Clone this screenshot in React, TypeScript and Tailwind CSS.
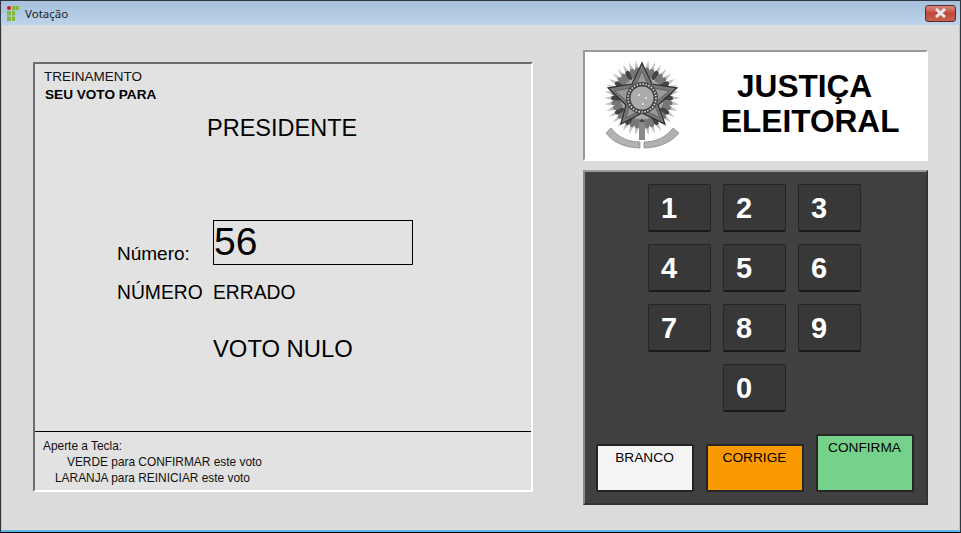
const linhas = [
  ["1", "2", "3"],
  ["4", "5", "6"],
  ["7", "8", "9"],
];

function Tecla({ n }: { n: string }) {
  return (
    <button className="w-[63px] h-[48px] rounded-[2px] bg-[#383838] border border-[#252525] border-b-2 border-b-[#1a1a1a] text-white text-[29px] font-bold text-left pl-[12px] pt-[1px] leading-none">
      {n}
    </button>
  );
}

function Brasao() {
  const raios = Array.from({ length: 36 }, (_, i) => i * 10);
  const star = "39,3 49,24 74,28 55,45 62,64 39,53 18,64 23,45 5,28 29,24";
  const inner = "39,11 46,27 66,31 51,44 57,58 39,49 23,58 27,44 12,31 32,27";
  return (
    <svg width="80" height="92" viewBox="0 0 80 92" className="shrink-0 blur-[0.4px]">
      <g transform="translate(39 38)">
        {raios.map((r) => (
          <polygon key={r} points="-3,-26 0,-38 3,-26" fill="#c2c2c2" transform={`rotate(${r})`} />
        ))}
        <circle r="29" fill="#a8a8a8" />
        {raios.map((r) => (
          <ellipse key={r} cx="0" cy="-26" rx="2.6" ry="5" fill={r % 30 === 0 ? "#444" : "#777"} transform={`rotate(${r})`} />
        ))}
      </g>
      <polygon points={star} fill="#777" stroke="#2c2c2c" strokeWidth="1.2" />
      <polygon points={inner} fill="#9a9a9a" stroke="#555" strokeWidth="0.8" />
      <circle cx="39" cy="38" r="16" fill="#444" />
      <circle cx="39" cy="38" r="14" fill="none" stroke="#dedede" strokeWidth="1.6" strokeDasharray="1.5 1.5" />
      <circle cx="39" cy="38" r="11.5" fill="#ababab" />
      <circle cx="36" cy="35" r="1" fill="#ececec" />
      <circle cx="43" cy="38" r="1" fill="#ececec" />
      <circle cx="40" cy="44" r="1" fill="#ececec" />
      <rect x="36" y="62" width="6" height="18" fill="#8a8a8a" />
      <path d="M8 68 C16 79 28 82 37 82 L37 88 C24 88 10 83 3 73 Z" fill="#b2b2b2" stroke="#808080" strokeWidth="0.7" />
      <path d="M70 68 C62 79 50 82 41 82 L41 88 C54 88 68 83 76 73 Z" fill="#b2b2b2" stroke="#808080" strokeWidth="0.7" />
    </svg>
  );
}

export default function App() {
  return (
    <div className="w-[961px] h-[533px] flex flex-col overflow-hidden bg-[#dcdcdc] border border-[#2e3840] border-b-black font-['Liberation_Sans',Arial,sans-serif] text-[#111]">
      <div className="h-[24px] shrink-0 flex items-center pl-[6px] pr-[4px] bg-gradient-to-b from-[#a6c1dc] to-[#bdd3ea]">
        <svg width="12" height="15" viewBox="0 0 12 15" className="shrink-0">
          <circle cx="2" cy="2" r="2" fill="#e8101c" />
          <rect x="5" y="0" width="3" height="4" fill="#7fb83c" />
          <rect x="8.5" y="0" width="3.5" height="4" fill="#7fb83c" />
          <rect x="0" y="5" width="4" height="4.5" fill="#7fb83c" />
          <rect x="5" y="5" width="3" height="4.5" fill="#7fb83c" />
          <rect x="0" y="10.5" width="4" height="4.5" fill="#7fb83c" />
          <rect x="5" y="10.5" width="3" height="4.5" fill="#7fb83c" />
        </svg>
        <span className="ml-[6px] mt-[1px] text-[11.5px] font-['Noto_Sans',sans-serif] text-[#222]">Votação</span>
        <div className="ml-auto w-[31px] h-[17px] rounded-[3px] border border-[#5a2a30] bg-gradient-to-b from-[#d98a80] via-[#c0483a] to-[#c8604c] flex items-center justify-center">
          <svg width="15" height="10" viewBox="0 0 15 10">
            <path d="M3 1 L12 9 M12 1 L3 9" stroke="#e8e8e8" strokeWidth="3" />
          </svg>
        </div>
      </div>

      <div className="flex-1 flex border-x border-b-2 border-x-[#a9c6de] border-b-[#5fb8e8] pl-[31px]">
        <div className="w-[500px] h-[430px] mt-[37px] bg-[#e2e2e2] border-2 border-t-[#6e6e6e] border-l-[#6e6e6e] border-r-white border-b-white flex flex-col">
          <div className="flex-1 flex flex-col pl-[9px]">
            <p className="text-[13.5px] leading-[16px] mt-[5px] text-[#111]">TREINAMENTO</p>
            <p className="text-[13.6px] leading-[14px] mt-[3px] ml-[1px] font-bold text-black">SEU VOTO PARA</p>
            <p className="text-[23.5px] leading-[28px] mt-[12px] ml-[163px] text-black">PRESIDENTE</p>
            <div className="flex items-end mt-[78px] ml-[73px]">
              <span className="w-[96px] text-[19px] leading-[21px] mb-[1px] text-black">Número:</span>
              <div className="w-[200px] h-[45px] border border-black text-[39px] leading-[41px] text-black">56</div>
            </div>
            <div className="flex mt-[17px] ml-[73px] text-[19.3px] leading-[21px] text-black">
              <span className="w-[96px]">NÚMERO</span>
              <span>ERRADO</span>
            </div>
            <p className="text-[23.8px] leading-[28px] mt-[32px] ml-[169px] text-black">VOTO NULO</p>
          </div>
          <div className="h-[59px] border-t border-black pl-[8px] pt-[6px] text-[11.9px] leading-[16px] text-[#111]">
            <p>Aperte a Tecla:</p>
            <p className="ml-[24px]">VERDE para CONFIRMAR este voto</p>
            <p className="ml-[12px]">LARANJA para REINICIAR este voto</p>
          </div>
        </div>

        <div className="ml-[50px] mt-[25px] w-[345px] flex flex-col">
          <div className="h-[111px] bg-white border-2 border-t-[#9a9a9a] border-l-[#9a9a9a] border-r-transparent border-b-transparent flex items-center pl-[18px]">
            <Brasao />
            <h1 className="ml-[38px] mt-[-3px] text-[31.6px] leading-[35px] font-bold text-black">
              <span className="block ml-[16px]">JUSTIÇA</span>
              <span className="block">ELEITORAL</span>
            </h1>
          </div>
          <div className="mt-[9px] h-[335px] bg-[#404040] border-2 border-t-[#9a9a9a] border-l-[#8a8a8a] border-r-[#333] border-b-[#333] flex flex-col items-center pt-[12px] pr-[2px]">
            <div className="flex flex-col gap-[12px]">
              {linhas.map((l) => (
                <div key={l[0]} className="flex gap-[12px]">
                  {l.map((n) => (
                    <Tecla key={n} n={n} />
                  ))}
                </div>
              ))}
              <div className="flex justify-center">
                <Tecla n="0" />
              </div>
            </div>
            <div className="flex items-end gap-[12px] mt-[22px]">
              <button className="w-[98px] h-[48px] rounded-[2px] border-2 border-[#252525] bg-[#f4f4f4] text-[13.7px] leading-[16px] text-center pb-[20px] text-black">BRANCO</button>
              <button className="w-[98px] h-[48px] rounded-[2px] border-2 border-[#252525] bg-[#fb9a00] text-[13.7px] leading-[16px] text-center pb-[20px] text-black">CORRIGE</button>
              <button className="w-[98px] h-[58px] rounded-[2px] border-2 border-[#252525] bg-[#76d28a] text-[13.7px] leading-[16px] text-center pb-[30px] text-black">CONFIRMA</button>
            </div>
          </div>
        </div>
      </div>
    </div>
  );
}
